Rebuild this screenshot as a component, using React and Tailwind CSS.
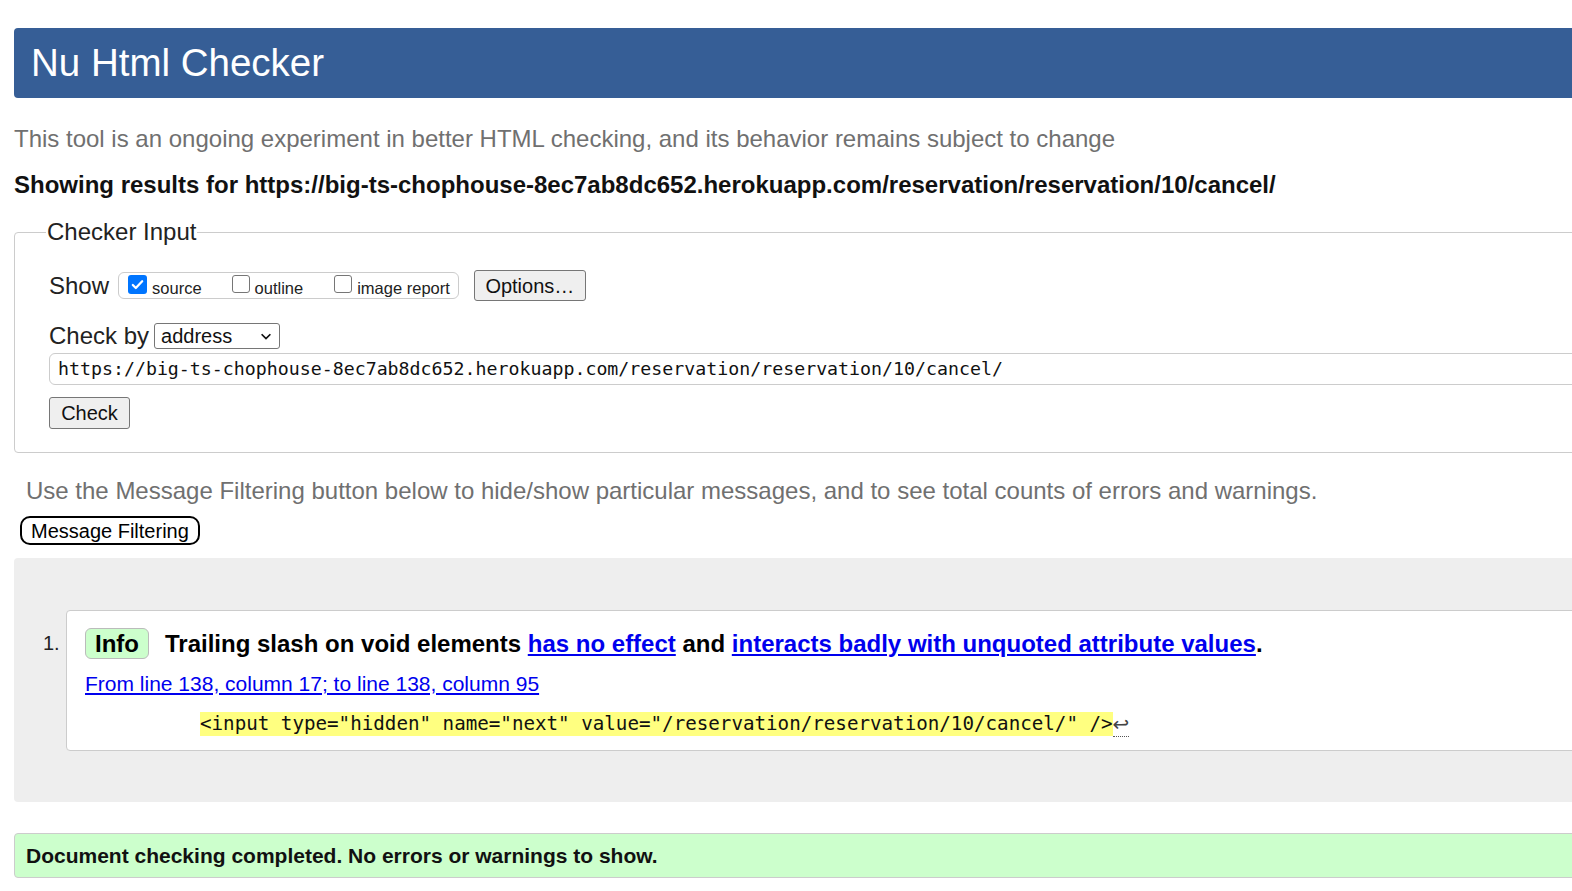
import React from 'react';

const sans = "font-['Liberation_Sans',Arial,sans-serif]";
const mono = "font-['DejaVu_Sans_Mono',monospace]";

function Box({ checked, label }) {
  return (
    <label className="flex items-center gap-[5px]">
      {checked ? (
        <span className="w-[19px] h-[19px] rounded-[3px] bg-[#0075ff] flex items-center justify-center -mt-[3px]">
          <svg viewBox="0 0 16 16" className="w-[15px] h-[15px]" fill="none" stroke="white" strokeWidth="2.4" strokeLinecap="round" strokeLinejoin="round">
            <path d="M3 8.5l3.2 3.2L13 4.5" />
          </svg>
        </span>
      ) : (
        <span className="w-[18px] h-[18px] rounded-[3px] border border-[#767676] bg-white -mt-[3px]" />
      )}
      <span className="text-[16.5px] text-[#222] mt-[5px] leading-[20px]">{label}</span>
    </label>
  );
}

export default function App() {
  return (
    <div className={`w-[1572px] h-[891px] overflow-hidden bg-white ${sans}`}>
      <div className="w-[1700px] pl-[14px] pt-[28px]">
        <h1 className="bg-[#365e96] text-white rounded-[4px] h-[70px] pl-[17px] flex items-center text-[38.5px] leading-none">
          Nu Html Checker
        </h1>

        <p className="mt-[27px] text-[24px] text-[#707070] leading-[28px]">
          This tool is an ongoing experiment in better HTML checking, and its behavior remains subject to change
        </p>
        <p className="mt-[18px] text-[24px] font-bold text-[#111] leading-[28px]">
          Showing results for https://big-ts-chophouse-8ec7ab8dc652.herokuapp.com/reservation/reservation/10/cancel/
        </p>

        <fieldset className="mt-[19px] border border-[#ccc] rounded-[4px] pl-[34px] pr-[14px] pb-[23px] pt-0">
          <legend className="text-[24px] text-[#222] leading-[28px] px-[1px] -ml-[3px]">Checker Input</legend>
          <div className="flex items-center mt-[24px] h-[31px]">
            <span className="text-[24px] text-[#222] leading-[28px] mr-[9px]">Show</span>
            <div className="flex items-center border border-[#ccc] rounded-[6px] h-[27px] pl-[9px] pr-[8px]">
              <Box checked label="source" />
              <span className="w-[30px]" />
              <Box label="outline" />
              <span className="w-[31px]" />
              <Box label="image report" />
            </div>
            <button className="ml-[15px] h-[31px] w-[112px] border border-[#767676] rounded-[3px] bg-[#efefef] text-[20px] text-[#111]">
              Options…
            </button>
          </div>
          <div className="flex items-center mt-[22px] h-[26px]">
            <span className="text-[24px] text-[#222] leading-[28px] mr-[5px]">Check by</span>
            <div className="w-[126px] h-[26px] border border-[#767676] rounded-[3px] flex items-center justify-between pl-[6px] pr-[6px]">
              <span className="text-[20px] text-[#111] leading-none">address</span>
              <svg viewBox="0 0 16 16" className="w-[14px] h-[14px]" fill="none" stroke="#111" strokeWidth="2">
                <path d="M3 6l5 5 5-5" />
              </svg>
            </div>
          </div>
          <div className={`mt-[4px] h-[32px] border border-[#ccc] rounded-[6px] flex items-center pl-[8px] text-[18.25px] text-[#111] ${mono}`}>
            https://big-ts-chophouse-8ec7ab8dc652.herokuapp.com/reservation/reservation/10/cancel/
          </div>
          <button className="mt-[12px] h-[32px] w-[81px] border border-[#767676] rounded-[3px] bg-[#efefef] text-[20px] text-[#111] block">
            Check
          </button>
        </fieldset>

        <p className="mt-[24px] ml-[12px] text-[24px] text-[#707070] leading-[28px]">
          Use the Message Filtering button below to hide/show particular messages, and to see total counts of errors and warnings.
        </p>
        <button className="mt-[11px] ml-[6px] h-[29px] px-[9px] border-2 border-black rounded-[10px] bg-white text-[20px] text-black leading-none">
          Message Filtering
        </button>

        <div className="mt-[13px] bg-[#eee] rounded-[4px] h-[244px] pt-[52px] pl-[52px]">
          <div className="flex">
            <span className="w-[0px] relative">
              <span className="absolute -left-[23px] top-[21px] text-[20px] leading-[24px] text-[#222]">1.</span>
            </span>
            <div className="flex-1 bg-white border border-[#ccc] rounded-[4px] h-[141px] pl-[18px] pt-[17px]">
              <div className="flex items-center">
                <span className="bg-[#ccffcc] border border-[#bbb] rounded-[6px] h-[31px] px-[9px] flex items-center text-[24px] font-bold text-black">
                  Info
                </span>
                <span className="ml-[16px] text-[24px] leading-[28px] font-bold text-black">
                  Trailing slash on void elements{' '}
                  <a className="text-[#0000ee] underline">has no effect</a> and{' '}
                  <a className="text-[#0000ee] underline">interacts badly with unquoted attribute values</a>.
                </span>
              </div>
              <a className="block mt-[13px] text-[21px] text-[#0000ee] underline leading-[24px]">
                From line 138, column 17; to line 138, column 95
              </a>
              <div className={`mt-[14px] ml-[115px] flex items-center text-[19.2px] leading-[24px] ${mono}`}>
                <span className="bg-[#ffff80] text-[#111]">
                  &lt;input type="hidden" name="next" value="/reservation/reservation/10/cancel/" /&gt;
                </span>
                <span className="text-[#444] border-b border-dotted border-[#555] font-['DejaVu_Sans',sans-serif] text-[20px] leading-[24px] mt-[2px]">↩</span>
              </div>
            </div>
          </div>
        </div>

        <div className="mt-[31px] bg-[#ccffcc] border border-[#ccc] rounded-[4px] h-[45px] flex items-center pl-[11px] text-[21px] font-bold text-[#111]">
          Document checking completed. No errors or warnings to show.
        </div>
      </div>
    </div>
  );
}
